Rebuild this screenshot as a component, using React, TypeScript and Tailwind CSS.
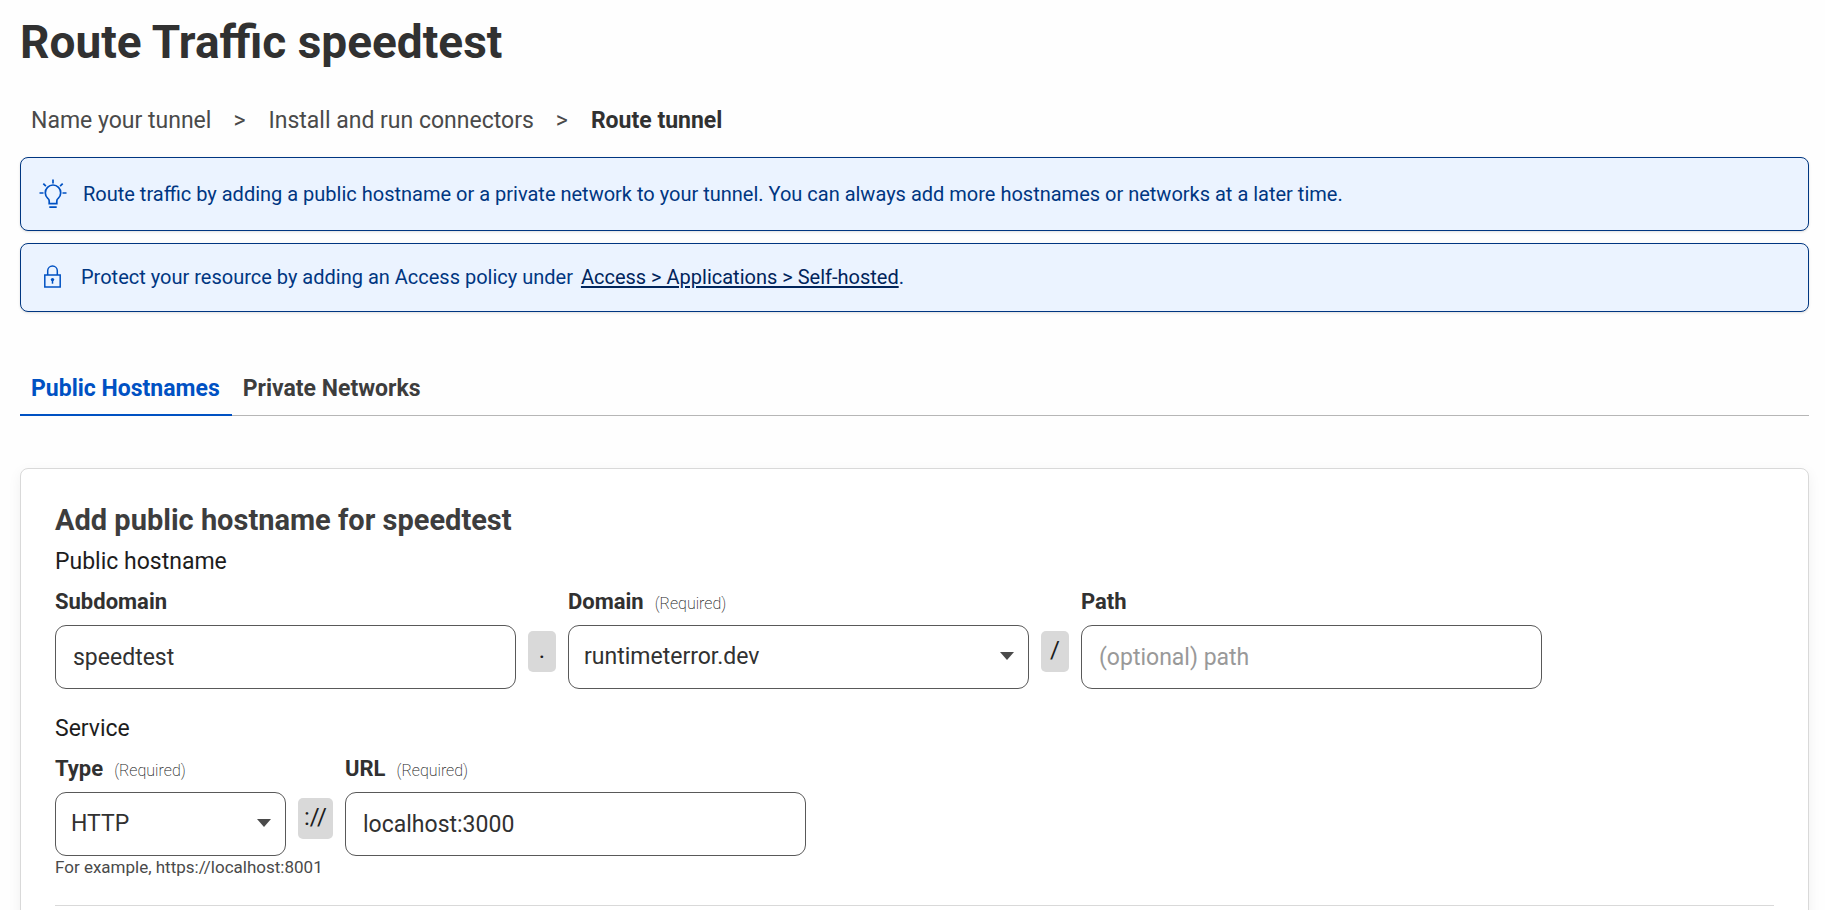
import { useState } from "react";
import type { ReactNode } from "react";

const steps = ["Name your tunnel", "Install and run connectors", "Route tunnel"];
const tabs = ["Public Hostnames", "Private Networks"];

function BulbIcon() {
  return (
    <svg width="28" height="30" viewBox="0 0 28 30" fill="none" stroke="#0051c3" strokeWidth="1.7" aria-hidden="true">
      <path d="M10.2 24.600v-2.600c0-1-.3-1.800-1.400-2.600a7.700 7.700 0 1 1 10.400 0c-1.100.8-1.400 1.600-1.400 2.600v2.600z" />
      <path d="M10.300 28.200h7.400M14 .5v4M.5 14h4M23.500 14h4M4.300 4.600l2.600 2.600M23.700 4.600l-2.600 2.600" />
    </svg>
  );
}

function LockIcon() {
  return (
    <svg width="17" height="23" viewBox="0 0 17 23" fill="none" stroke="#0051c3" strokeWidth="1.500" aria-hidden="true">
      <path d="M.8 10h15.400v12H.8zM3.700 10V5.800a4.800 4.800 0 0 1 9.600 0V10" />
      <circle cx="8.500" cy="14.600" r="1.700" fill="#0051c3" stroke="none" />
      <path d="M8.500 15v3.700" />
    </svg>
  );
}

function Label({ htmlFor, text, required }: { htmlFor: string; text: string; required?: boolean }) {
  return (
    <label htmlFor={htmlFor} className="flex h-7 items-baseline gap-[11px] text-[22px] leading-7 font-bold text-[#313131]">
      {text}
      {required && <span className="text-base font-extralight text-[#262626]">(Required)</span>}
    </label>
  );
}

function Separator({ children }: { children: ReactNode }) {
  return (
    <span className="mx-3 mt-[43px] flex h-[41px] min-w-7 items-center justify-center rounded-[5px] bg-[#d9d9d9] px-1.5 pb-1 text-2xl leading-7 text-[#1d1d1d]">
      {children}
    </span>
  );
}

function Select({ id, value }: { id: string; value: string }) {
  return (
    <div className="relative">
      <select
        id={id}
        defaultValue={value}
        className="h-16 w-full appearance-none rounded-[11px] border border-[#595959] bg-white px-[15px] text-[23px] text-[#313131]"
      >
        <option>{value}</option>
      </select>
      <svg width="14" height="8" viewBox="0 0 14 8" className="pointer-events-none absolute top-[27px] right-[15px]" aria-hidden="true">
        <path d="M0 0h14L7 8z" fill="#4a4a4a" />
      </svg>
    </div>
  );
}

const inputClass =
  "h-16 w-full rounded-[11px] border border-[#595959] bg-white px-[17px] text-[23px] text-[#313131] placeholder:text-[#999999]";

export default function App() {
  const [active, setActive] = useState(tabs[0]);
  return (
    <main className="h-screen overflow-hidden bg-[#fefefe] px-5 pr-4 font-[Roboto,sans-serif] text-[#313131]">
      <h1 className="pt-[14px] text-[46px] leading-[56px] font-bold">Route Traffic speedtest</h1>

      <nav aria-label="Progress" className="mt-[37px] pl-[11px]">
        <ol className="flex text-[23px] leading-7">
          {steps.map((step, i) => (
            <li key={step} className={i === steps.length - 1 ? "font-bold" : "text-[#4a4a4a]"}>
              {step}
              {i < steps.length - 1 && <span className="mr-[23px] ml-[22px]">&gt;</span>}
            </li>
          ))}
        </ol>
      </nav>

      <section className="mt-[22px] flex h-[74px] items-center gap-4 rounded-lg border border-[#003681] bg-[#ebf3ff] pl-[18px] text-xl text-[#003681] shadow-sm">
        <BulbIcon />
        <p>Route traffic by adding a public hostname or a private network to your tunnel. You can always add more hostnames or networks at a later time.</p>
      </section>

      <section className="mt-3 flex h-[69px] items-center gap-5 rounded-lg border border-[#003681] bg-[#ebf3ff] pb-0.5 pl-[23px] text-xl text-[#003681] shadow-sm">
        <LockIcon />
        <p>
          Protect your resource by adding an Access policy under{" "}
          <a href="#access" className="ml-[3px] text-[#00245b] underline decoration-2 underline-offset-2">Access &gt; Applications &gt; Self-hosted</a>.
        </p>
      </section>

      <div role="tablist" className="mt-[60px] flex h-11 border-b border-[#b6b6b6]">
        {tabs.map((tab) => (
          <button
            key={tab}
            role="tab"
            aria-selected={active === tab}
            onClick={() => setActive(tab)}
            className={
              active === tab
                ? "-mb-px flex h-11 items-start border-b-2 border-[#0051c3] pr-3 pl-[11px] text-[23px] leading-[34px] font-bold text-[#0051c3]"
                : "flex h-[43px] items-start pr-3 pl-[11px] text-[23px] leading-[34px] font-bold text-[#3d3d3d]"
            }
          >
            {tab}
          </button>
        ))}
      </div>

      <section className="mt-[52px] rounded-lg border border-[#d9d9d9] bg-white px-[34px] pt-[33px] pb-16 shadow-[0_4px_14px_rgba(0,0,0,0.06)]">
        <h2 className="text-[29px] leading-9 font-bold text-[#3d3d3d]">Add public hostname for speedtest</h2>
        <h3 className="mt-[10px] text-[23px] leading-7 text-[#1d1d1d]">Public hostname</h3>
        <div className="mt-3 flex items-start">
          <div className="w-[461px]">
            <Label htmlFor="subdomain" text="Subdomain" />
            <div className="mt-[9px]"><input id="subdomain" defaultValue="speedtest" className={inputClass} /></div>
          </div>
          <Separator>.</Separator>
          <div className="w-[461px]">
            <Label htmlFor="domain" text="Domain" required />
            <div className="mt-[9px]"><Select id="domain" value="runtimeterror.dev" /></div>
          </div>
          <Separator>/</Separator>
          <div className="w-[461px]">
            <Label htmlFor="path" text="Path" />
            <div className="mt-[9px]"><input id="path" placeholder="(optional) path" className={inputClass} /></div>
          </div>
        </div>

        <h3 className="mt-[26px] text-[23px] leading-7 text-[#1d1d1d]">Service</h3>
        <div className="mt-3 flex items-start">
          <div className="w-[231px]">
            <Label htmlFor="type" text="Type" required />
            <div className="mt-[9px]"><Select id="type" value="HTTP" /></div>
          </div>
          <Separator>://</Separator>
          <div className="w-[461px]">
            <Label htmlFor="url" text="URL" required />
            <div className="mt-[9px]"><input id="url" defaultValue="localhost:3000" className={inputClass} /></div>
          </div>
        </div>
        <p className="text-[17px] leading-[22px] text-[#4a4a4a]">For example, https://localhost:8001</p>
        <hr className="mt-[27px] border-[#d9d9d9]" />
      </section>
    </main>
  );
}
